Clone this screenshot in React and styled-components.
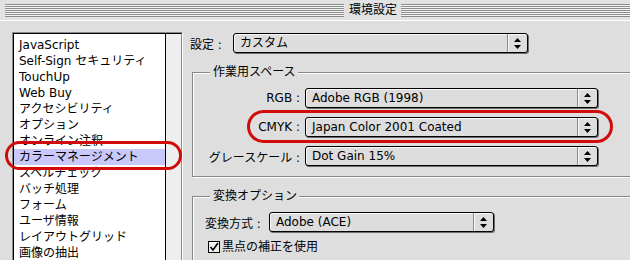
import React from "react";
import styled, { createGlobalStyle } from "styled-components";

const GlobalStyle = createGlobalStyle`
  body {
    margin: 0;
    background: #dedede;
    font-family: "DejaVu Sans", "Noto Sans CJK JP", sans-serif;
    font-size: 12px;
    color: #000;
  }
`;

const items = [
  "JavaScript",
  "Self-Sign セキュリティ",
  "TouchUp",
  "Web Buy",
  "アクセシビリティ",
  "オプション",
  "オンライン注釈",
  "カラーマネージメント",
  "スペルチェック",
  "バッチ処理",
  "フォーム",
  "ユーザ情報",
  "レイアウトグリッド",
  "画像の抽出",
];

//WINDOW
const Window = styled.div`
  position: relative;
  width: 630px;
  height: 260px;
  overflow: hidden;
  background: #dedede;
`;

const TitleBar = styled.div`
  display: flex;
  align-items: center;
  height: 20px;
  border-bottom: 1px solid #000;
  background: #e2e2e2;
`;

const Stripes = styled.div`
  height: 13px;
  margin-left: ${props => props.left || 0}px;
  width: ${props => (props.width ? props.width + "px" : "auto")};
  flex: ${props => (props.width ? "none" : 1)};
  background: repeating-linear-gradient(
    to bottom,
    #8c8c8c 0,
    #8c8c8c 1px,
    #f4f4f4 1px,
    #f4f4f4 2px
  );
`;

const Title = styled.div`
  padding: 0 4px 0 5px;
  line-height: 20px;
`;

const Body = styled.div`
  display: flex;
  align-items: flex-start;
  padding-top: 11px;
  border-top: 1px solid #fff;
  margin-top: -1px;
`;

//SIDEBAR LIST
const ListFrame = styled.div`
  display: flex;
  margin-left: 12px;
  border: 1px solid;
  border-color: #8a8a8a #fff #fff #8a8a8a;
  height: 260px;
`;

const List = styled.div`
  width: 151px;
  background: #fff;
  border: 1px solid #000;
  padding-top: 3px;
`;

const ListItem = styled.div`
  height: 16px;
  line-height: 16px;
  padding-left: 5px;
  white-space: nowrap;
  background: ${props => (props.selected ? "#c8c8fa" : "transparent")};
`;

const ScrollTrack = styled.div`
  width: 15px;
  background: #eeeeee;
  border-top: 1px solid #000;
  border-right: 1px solid #8a8a8a;
`;

//MAIN AREA
const Main = styled.div`
  margin-left: 7px;
  display: flex;
  flex-direction: column;
`;

const SettingRow = styled.div`
  display: flex;
  align-items: center;
  margin-top: 1px;
`;

const Label = styled.div`
  width: ${props => props.width}px;
  flex: none;
  white-space: nowrap;
  text-align: ${props => props.align || "left"};
  padding-right: ${props => props.pad || 0}px;
  box-sizing: border-box;
`;

const Group = styled.fieldset`
  width: 460px;
  margin: ${props => props.top}px 0 0 2px;
  padding: 9px 0 10px 12px;
  border: 1px solid #888;
  box-shadow: inset 1px 1px 0 #fff, 1px 1px 0 #fff;
  min-inline-size: 0;
`;

const Legend = styled.legend`
  margin-left: 5px;
  padding: 0 2px 0 3px;
  line-height: 14px;
  background: #dedede;
`;

const FieldGrid = styled.div`
  display: grid;
  grid-template-columns: ${props => props.labelWidth}px auto;
  grid-auto-rows: 20px;
  row-gap: 9px;
  align-items: center;
  justify-items: start;
`;

const CheckRow = styled.label`
  display: flex;
  align-items: center;
  gap: 2px;
  margin: 8px 0 0 3px;
  line-height: 14px;
`;

//POPUP MENU
const PopupBox = styled.div`
  display: flex;
  width: ${props => props.width}px;
  height: 20px;
  box-sizing: border-box;
  border: 1px solid #000;
  border-radius: 3px;
  background: #dddddd;
  box-shadow: inset 1px 1px 0 #fafafa, 1px 1px 0 #6e6e6e;
`;

const PopupText = styled.div`
  flex: 1;
  padding-left: 6px;
  line-height: 18px;
  white-space: nowrap;
  overflow: hidden;
`;

const PopupArrow = styled.div`
  width: 19px;
  display: flex;
  align-items: center;
  justify-content: center;
  border-left: 1px solid #8a8a8a;
  box-shadow: inset 1px 0 0 #fafafa;
`;

//RED MARKERS
const Marker = styled.div`
  position: absolute;
  left: ${props => props.x}px;
  top: ${props => props.y}px;
  width: ${props => props.w}px;
  height: ${props => props.h}px;
  box-sizing: border-box;
  border: 3px solid #d20a0a;
  border-radius: ${props => props.h / 2}px;
  pointer-events: none;
`;

function Arrows() {
  return (
    <svg width="7" height="11" viewBox="0 0 7 11">
      <polygon points="3.5,0 7,4 0,4" fill="#000" />
      <polygon points="0,7 7,7 3.5,11" fill="#000" />
    </svg>
  );
}

function Popup({ width, children }) {
  return (
    <PopupBox width={width}>
      <PopupText>{children}</PopupText>
      <PopupArrow>
        <Arrows />
      </PopupArrow>
    </PopupBox>
  );
}

function CheckBox() {
  return (
    <svg width="12" height="12" viewBox="0 0 12 12">
      <rect x="0.5" y="0.5" width="11" height="11" fill="#eeeeee" stroke="#000" />
      <path d="M1.5 1.5 H10.5" stroke="#fff" />
      <path d="M2.5 6 L5 9 L10 2" fill="none" stroke="#000" strokeWidth="1.6" />
    </svg>
  );
}

export default function App() {
  return (
    <>
      <GlobalStyle />
      <Window>
        <TitleBar>
          <Stripes left={5} width={339} />
          <Title>環境設定</Title>
          <Stripes />
        </TitleBar>
        <Body>
          <ListFrame>
            <List>
              {items.map(item => (
                <ListItem key={item} selected={item === "カラーマネージメント"}>
                  {item}
                </ListItem>
              ))}
            </List>
            <ScrollTrack />
          </ListFrame>
          <Main>
            <SettingRow>
              <Label width={43}>設定 :</Label>
              <Popup width={295}>カスタム</Popup>
            </SettingRow>

            <Group top={12}>
              <Legend>作業用スペース</Legend>
              <FieldGrid labelWidth={100}>
                <Label width={100} align="right" pad={5}>RGB :</Label>
                <Popup width={293}>Adobe RGB (1998)</Popup>
                <Label width={100} align="right" pad={5}>CMYK :</Label>
                <Popup width={293}>Japan Color 2001 Coated</Popup>
                <Label width={100} align="right" pad={5}>グレースケール :</Label>
                <Popup width={293}>Dot Gain 15%</Popup>
              </FieldGrid>
            </Group>

            <Group top={12}>
              <Legend>変換オプション</Legend>
              <FieldGrid labelWidth={64}>
                <Label width={64}>変換方式 :</Label>
                <Popup width={225}>Adobe (ACE)</Popup>
              </FieldGrid>
              <CheckRow>
                <CheckBox />
                黒点の補正を使用
              </CheckRow>
            </Group>
          </Main>
        </Body>
        <Marker x={5} y={141} w={177} h={29} />
        <Marker x={247} y={110} w={366} h={33} />
      </Window>
    </>
  );
}
